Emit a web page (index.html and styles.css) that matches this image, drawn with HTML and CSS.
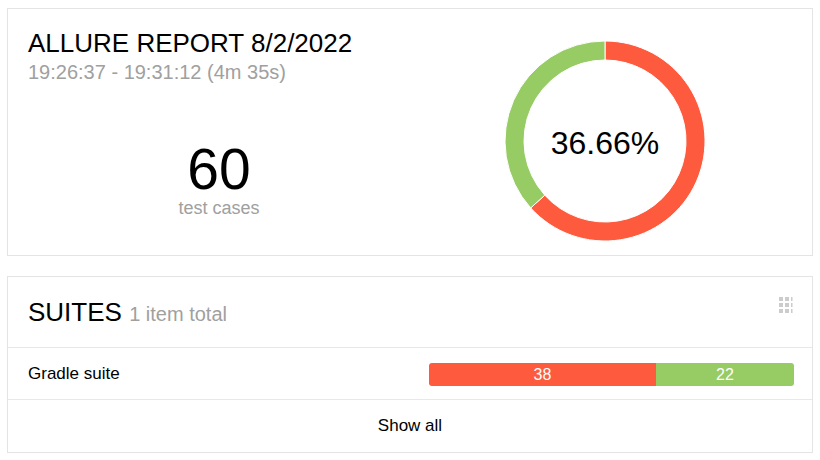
FILE: index.html
```html
<!DOCTYPE html>
<html>
<head>
<meta charset="utf-8">
<link rel="stylesheet" href="styles.css">
</head>
<body>
<div class="page">
  <section class="card summary">
    <div class="summary-left">
      <h2 class="title">ALLURE REPORT 8/2/2022</h2>
      <div class="subtitle">19:26:37 - 19:31:12 (4m 35s)</div>
      <div class="stats">
        <div class="stats-num">60</div>
        <div class="stats-label">test cases</div>
      </div>
    </div>
    <div class="summary-right">
      <div class="donut">
        <svg class="donut-svg" width="200" height="200" viewBox="0 0 200 200">
          <path d="M100,0 A100,100 0 1 1 25.69,166.91 L39.81,154.20 A81,81 0 1 0 100,19 Z" fill="#fd5a3e" stroke="#fff" stroke-width="1"/>
          <path d="M25.69,166.91 A100,100 0 0 1 100,0 L100,19 A81,81 0 0 0 39.81,154.20 Z" fill="#97cc64" stroke="#fff" stroke-width="1"/>
        </svg>
        <div class="donut-label">36.66%</div>
      </div>
    </div>
  </section>

  <section class="card suites">
    <div class="suites-head">
      <h2 class="title">SUITES <span class="total">1 item total</span></h2>
      <svg class="grid-icon" width="14" height="17" viewBox="0 0 14 17">
        <rect x="0" y="0" width="4" height="4" fill="#ccc"/>
        <rect x="6" y="0" width="4" height="4" fill="#ccc"/>
        <rect x="12" y="0" width="1.5" height="4" fill="#ccc"/>
        <rect x="0" y="6" width="4" height="4" fill="#ccc"/>
        <rect x="6" y="6" width="4" height="4" fill="#ccc"/>
        <rect x="12" y="6" width="1.5" height="4" fill="#ccc"/>
        <rect x="0" y="12" width="4" height="4" fill="#ccc"/>
        <rect x="6" y="12" width="4" height="4" fill="#ccc"/>
        <rect x="12" y="12" width="1.5" height="4" fill="#ccc"/>
      </svg>
    </div>
    <div class="suite-row">
      <div class="suite-name">Gradle suite</div>
      <div class="bar">
        <div class="bar-seg failed" style="width:62.2%">38</div>
        <div class="bar-seg passed" style="width:37.8%">22</div>
      </div>
    </div>
    <div class="show-all">Show all</div>
  </section>
</div>
</body>
</html>
```

FILE: styles.css
```css
* { box-sizing: border-box; }
html, body {
  margin: 0;
  padding: 0;
  background: #fff;
  font-family: "Liberation Sans", Arial, sans-serif;
  color: #000;
}
.page {
  padding: 8px 7px;
  display: flex;
  flex-direction: column;
  gap: 20px;
}
.card {
  border: 1px solid #e4e4e4;
  background: #fff;
}
.summary {
  height: 248px;
  padding: 19px 20px 0 20px;
  display: grid;
  grid-template-columns: 382px 1fr;
}
.title {
  margin: 0;
  font-size: 26px;
  font-weight: normal;
  line-height: 30px;
}
.subtitle {
  margin-top: 3px;
  font-size: 20px;
  line-height: 23px;
  color: #a0a0a0;
}
.stats {
  margin-top: 56px;
  text-align: center;
}
.stats-num {
  font-size: 57px;
  line-height: 58px;
}
.stats-label {
  font-size: 18px;
  line-height: 20px;
  color: #a0a0a0;
}
.summary-right {
  display: flex;
  justify-content: center;
  padding-left: 8px;
  padding-top: 13px;
}
.donut {
  display: grid;
  width: 200px;
  height: 200px;
}
.donut-svg, .donut-label {
  grid-area: 1 / 1;
}
.donut-svg { display: block; }
.donut-label {
  align-self: center;
  justify-self: center;
  font-size: 32px;
  line-height: 36px;
  margin-top: 4px;
}
.suites-head {
  height: 71px;
  display: flex;
  justify-content: space-between;
  align-items: flex-start;
  padding: 20px 19px 0 20px;
  border-bottom: 1px solid #e8e8e8;
}
.suites-head .grid-icon {
  display: block;
}
.total {
  font-size: 20px;
  line-height: 20px;
  color: #a0a0a0;
}
.suite-row {
  height: 52px;
  display: flex;
  align-items: center;
  padding: 0 18px 0 20px;
  border-bottom: 1px solid #e8e8e8;
}
.suite-name {
  flex: 1;
  font-size: 17px;
}
.bar {
  width: 365px;
  height: 23px;
  display: flex;
  border-radius: 3px;
  overflow: hidden;
  margin-top: 2px;
}
.bar-seg {
  color: #fff;
  font-size: 16px;
  line-height: 23px;
  text-align: center;
}
.failed { background: #fd5a3e; }
.passed { background: #97cc64; }
.show-all {
  height: 52px;
  display: flex;
  align-items: center;
  justify-content: center;
  font-size: 17px;
}
```
